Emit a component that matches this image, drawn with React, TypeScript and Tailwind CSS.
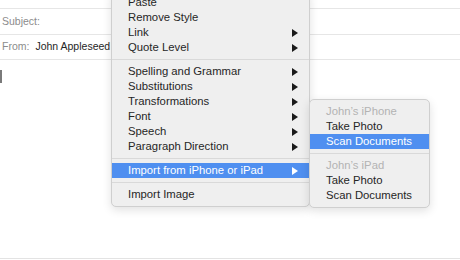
import React from 'react';

type Item =
  | { kind: 'item'; label: string; sub?: boolean; active?: boolean; header?: boolean }
  | { kind: 'sep' };

const mainMenu: Item[] = [
  { kind: 'item', label: 'Paste' },
  { kind: 'item', label: 'Remove Style' },
  { kind: 'item', label: 'Link', sub: true },
  { kind: 'item', label: 'Quote Level', sub: true },
  { kind: 'sep' },
  { kind: 'item', label: 'Spelling and Grammar', sub: true },
  { kind: 'item', label: 'Substitutions', sub: true },
  { kind: 'item', label: 'Transformations', sub: true },
  { kind: 'item', label: 'Font', sub: true },
  { kind: 'item', label: 'Speech', sub: true },
  { kind: 'item', label: 'Paragraph Direction', sub: true },
  { kind: 'sep' },
  { kind: 'item', label: 'Import from iPhone or iPad', sub: true, active: true },
  { kind: 'sep' },
  { kind: 'item', label: 'Import Image' },
];

const deviceMenu: Item[] = [
  { kind: 'item', label: 'John’s iPhone', header: true },
  { kind: 'item', label: 'Take Photo' },
  { kind: 'item', label: 'Scan Documents', active: true },
  { kind: 'sep' },
  { kind: 'item', label: 'John’s iPad', header: true },
  { kind: 'item', label: 'Take Photo' },
  { kind: 'item', label: 'Scan Documents' },
];

const Arrow = ({ white }: { white?: boolean }) => (
  <svg width="6" height="8" viewBox="0 0 6 8" className={white ? 'fill-white' : 'fill-[#1a1a1a]'}>
    <path d="M0 0 L6 4 L0 8 Z" />
  </svg>
);

const MenuRows = ({ items }: { items: Item[] }) => (
  <>
    {items.map((item, i) =>
      item.kind === 'sep' ? (
        <div key={i} className="h-[9px] flex items-center">
          <div className="h-px w-full bg-[#d9d9d9]" />
        </div>
      ) : (
        <div
          key={i}
          className={`h-[15px] flex items-center justify-between pl-4 pr-[11px] ${
            item.active ? 'bg-[#4f8ff0] text-white' : item.header ? 'text-[#b3b3b3]' : 'text-[#262626]'
          }`}
        >
          <span>{item.label}</span>
          {item.sub && <Arrow white={item.active} />}
        </div>
      )
    )}
  </>
);

export default function App() {
  return (
    <div className="relative w-[460px] h-[260px] overflow-hidden bg-white font-['Liberation_Sans',Arial,sans-serif] text-[11.3px]">
      <div className="h-[9px] border-b border-[#e6e6e6]" />
      <div className="h-[26px] flex items-center pl-[2px] border-b border-[#e6e6e6] text-[#8c8c8c] text-[10.5px]">
        Subject:
      </div>
      <div className="h-[25px] flex items-center pl-[2px] border-b border-[#e6e6e6] text-[10.5px]">
        <span className="text-[#8c8c8c]">From:</span>
        <span className="ml-[6px] text-[#262626]">John Appleseed</span>
      </div>
      <div className="mt-[10px] w-[2px] h-[13px] bg-[#7a7a7a]" />
      <div className="absolute left-0 right-0 top-[258px] h-px bg-[#e3e3e3]" />

      <div className="absolute left-[111px] top-[-10px] w-[199px] py-1 bg-[#efefef] border border-[#cfcfcf] rounded-[5px] shadow-[0_3px_10px_rgba(0,0,0,0.12)]">
        <MenuRows items={mainMenu} />
      </div>

      <div className="absolute left-[309px] top-[99px] w-[121px] py-1 bg-[#efefef] border border-[#cfcfcf] rounded-[5px] shadow-[0_3px_10px_rgba(0,0,0,0.12)]">
        <MenuRows items={deviceMenu} />
      </div>
    </div>
  );
}
